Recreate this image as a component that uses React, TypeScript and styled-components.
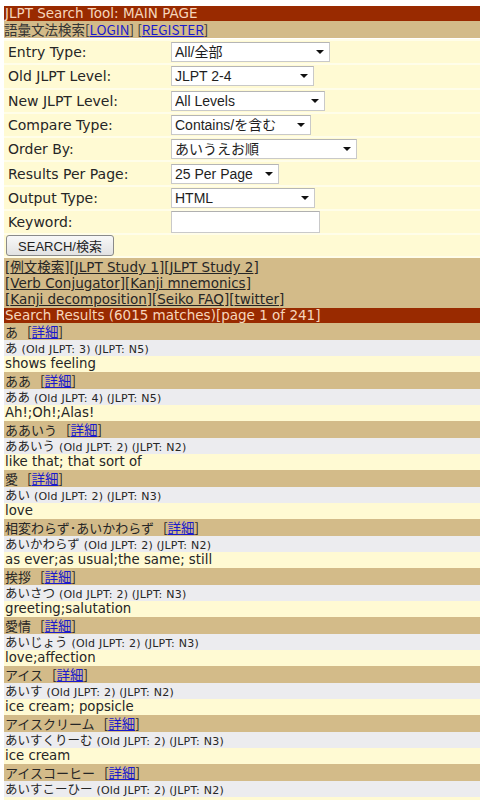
import React from "react";
import styled, { createGlobalStyle } from "styled-components";

const RED = "#992a00";
const TAN = "#d3bb89";
const YELLOW = "#fffad3";
const GRAY = "#ececef";
const TEXT = "#262626";
const FONT = `"DejaVu Sans", "Noto Sans CJK JP", sans-serif`;
const UIFONT = `"Liberation Sans", "Noto Sans CJK JP", sans-serif`;

const Global = createGlobalStyle`
  html, body { margin: 0; padding: 0; background: #ffffff; }
  body { padding: 6px 0 0 4px; font-family: ${FONT}; color: ${TEXT}; overflow: hidden; }
`;

const Page = styled.div`
  width: 476px;
  font-size: 13px;
`;

const RedBar = styled.div<{ $h: number }>`
  background: ${RED};
  color: #f6d6bc;
  height: ${(p) => p.$h}px;
  line-height: ${(p) => p.$h}px;
  padding-left: 1px;
  font-size: 13.5px;
  white-space: nowrap;
`;

const NavBar = styled.div`
  background: ${TAN};
  height: 17px;
  line-height: 17px;
  font-family: "Noto Sans CJK JP", ${FONT};
  font-size: 13.5px;
  white-space: nowrap;
  color: #333;
`;

const BlueLink = styled.a`
  color: #1a1acc;
  text-decoration: underline;
`;

const FormTable = styled.table`
  width: 100%;
  border-collapse: separate;
  border-spacing: 0 2px;
  background: #fffde9;
  margin-top: 1px;
`;

const Cell = styled.td<{ $w?: number }>`
  background: ${YELLOW};
  height: 22.3px;
  padding: 0 0 0 4px;
  font-size: 14px;
  width: ${(p) => (p.$w ? `${p.$w}px` : "auto")};
  vertical-align: middle;
  white-space: nowrap;
`;

const ButtonCell = styled.td`
  background: ${YELLOW};
  padding: 0 0 0 2px;
  height: 21px;
`;

const SelectWrap = styled.div<{ $w: number }>`
  position: relative;
  width: ${(p) => p.$w}px;
  height: 20px;
`;

const NativeSelect = styled.select`
  appearance: none;
  -webkit-appearance: none;
  width: 100%;
  height: 20px;
  box-sizing: border-box;
  border: 1px solid #c9c9c9;
  border-top-color: #b5b5b5;
  background: #ffffff;
  font-family: ${UIFONT};
  font-size: 14px;
  color: #1e1e1e;
  padding: 0 0 0 3px;
  margin: 0;
  outline: none;
`;

const Arrow = styled.span`
  position: absolute;
  right: 6px;
  top: 8px;
  width: 0;
  height: 0;
  border-left: 4px solid transparent;
  border-right: 4px solid transparent;
  border-top: 4px solid #111;
  pointer-events: none;
`;

const TextInput = styled.input`
  width: 149px;
  height: 22px;
  box-sizing: border-box;
  border: 1px solid #c9c9c9;
  border-top-color: #b0b0b0;
  background: #fff;
  margin: 0;
`;

const SearchButton = styled.button`
  display: block;
  width: 108px;
  height: 21px;
  border: 1px solid #8a8a8a;
  border-radius: 3px;
  background: linear-gradient(#f8f8f8, #e2e2e2);
  font-family: ${UIFONT};
  font-size: 13px;
  color: #1e1e1e;
  padding: 0;
  margin: 0;
`;

const LinksBar = styled.div`
  background: ${TAN};
  padding: 1px 0 1px 1px;
  font-size: 13.5px;
  line-height: 16px;
  white-space: nowrap;
`;

const DarkLink = styled.a`
  color: ${TEXT};
  text-decoration: underline;
`;

const Row = styled.div<{ $bg: string; $h: number }>`
  background: ${(p) => p.$bg};
  height: ${(p) => p.$h}px;
  line-height: ${(p) => p.$h}px;
  padding-left: 1px;
  font-size: 13.3px;
  white-space: nowrap;
`;

const Word = styled.span<{ $size: number }>`
  font-family: "Noto Sans CJK JP", ${FONT};
  font-size: ${(p) => p.$size}px;
`;

const Detail = styled.span`
  margin-left: 9px;
  font-family: "Noto Sans CJK JP", ${FONT};
  font-size: 13.5px;
`;

const Small = styled.span`
  font-size: 11px;
  letter-spacing: 0.2px;
  margin-left: 4px;
`;

type Field = { label: string; value?: string; width?: number; input?: boolean };

const fields: Field[] = [
  { label: "Entry Type:", value: "All/全部", width: 159 },
  { label: "Old JLPT Level:", value: "JLPT 2-4", width: 143 },
  { label: "New JLPT Level:", value: "All Levels", width: 154 },
  { label: "Compare Type:", value: "Contains/を含む", width: 140 },
  { label: "Order By:", value: "あいうえお順", width: 186 },
  { label: "Results Per Page:", value: "25 Per Page", width: 108 },
  { label: "Output Type:", value: "HTML", width: 144 },
  { label: "Keyword:", input: true },
];

type Entry = { word: string; kana: string; oldLv: number; lv: string; meaning: string };

const entries: Entry[] = [
  { word: "あ", kana: "あ", oldLv: 3, lv: "N5", meaning: "shows feeling" },
  { word: "ああ", kana: "ああ", oldLv: 4, lv: "N5", meaning: "Ah!;Oh!;Alas!" },
  { word: "ああいう", kana: "ああいう", oldLv: 2, lv: "N2", meaning: "like that; that sort of" },
  { word: "愛", kana: "あい", oldLv: 2, lv: "N3", meaning: "love" },
  { word: "相変わらず･あいかわらず", kana: "あいかわらず", oldLv: 2, lv: "N2", meaning: "as ever;as usual;the same; still" },
  { word: "挨拶", kana: "あいさつ", oldLv: 2, lv: "N3", meaning: "greeting;salutation" },
  { word: "愛情", kana: "あいじょう", oldLv: 2, lv: "N3", meaning: "love;affection" },
  { word: "アイス", kana: "あいす", oldLv: 2, lv: "N2", meaning: "ice cream; popsicle" },
  { word: "アイスクリーム", kana: "あいすくりーむ", oldLv: 2, lv: "N3", meaning: "ice cream" },
  { word: "アイスコーヒー", kana: "あいすこーひー", oldLv: 2, lv: "N2", meaning: "" },
];

export default function App() {
  return (
    <Page>
      <Global />
      <RedBar $h={15}>JLPT Search Tool: MAIN PAGE</RedBar>
      <NavBar>
        語彙文法検索[<BlueLink>LOGIN</BlueLink>] [<BlueLink>REGISTER</BlueLink>]
      </NavBar>
      <FormTable>
        <tbody>
          {fields.map((f) => (
            <tr key={f.label}>
              <Cell $w={159}>{f.label}</Cell>
              <Cell>
                {f.input ? (
                  <TextInput type="text" />
                ) : (
                  <SelectWrap $w={f.width!}>
                    <NativeSelect defaultValue={f.value}>
                      <option>{f.value}</option>
                    </NativeSelect>
                    <Arrow />
                  </SelectWrap>
                )}
              </Cell>
            </tr>
          ))}
          <tr>
            <ButtonCell colSpan={2}>
              <SearchButton>SEARCH/検索</SearchButton>
            </ButtonCell>
          </tr>
        </tbody>
      </FormTable>
      <LinksBar>
        [<DarkLink>例文検索</DarkLink>][<DarkLink>JLPT Study 1</DarkLink>][<DarkLink>JLPT Study 2</DarkLink>]
        <br />
        [<DarkLink>Verb Conjugator</DarkLink>][<DarkLink>Kanji mnemonics</DarkLink>]
        <br />
        [<DarkLink>Kanji decomposition</DarkLink>][<DarkLink>Seiko FAQ</DarkLink>][<DarkLink>twitter</DarkLink>]
      </LinksBar>
      <RedBar $h={15}>Search Results (6015 matches)[page 1 of 241]</RedBar>
      {entries.map((e) => (
        <div key={e.word}>
          <Row $bg={TAN} $h={17}>
            <Word $size={13}>{e.word}</Word>
            <Detail>
              [<BlueLink>詳細</BlueLink>]
            </Detail>
          </Row>
          <Row $bg={GRAY} $h={16}>
            <Word $size={12.5}>{e.kana}</Word>
            <Small>
              (Old JLPT: {e.oldLv}) (JLPT: {e.lv})
            </Small>
          </Row>
          <Row $bg={YELLOW} $h={16}>
            {e.meaning}
          </Row>
        </div>
      ))}
    </Page>
  );
}
